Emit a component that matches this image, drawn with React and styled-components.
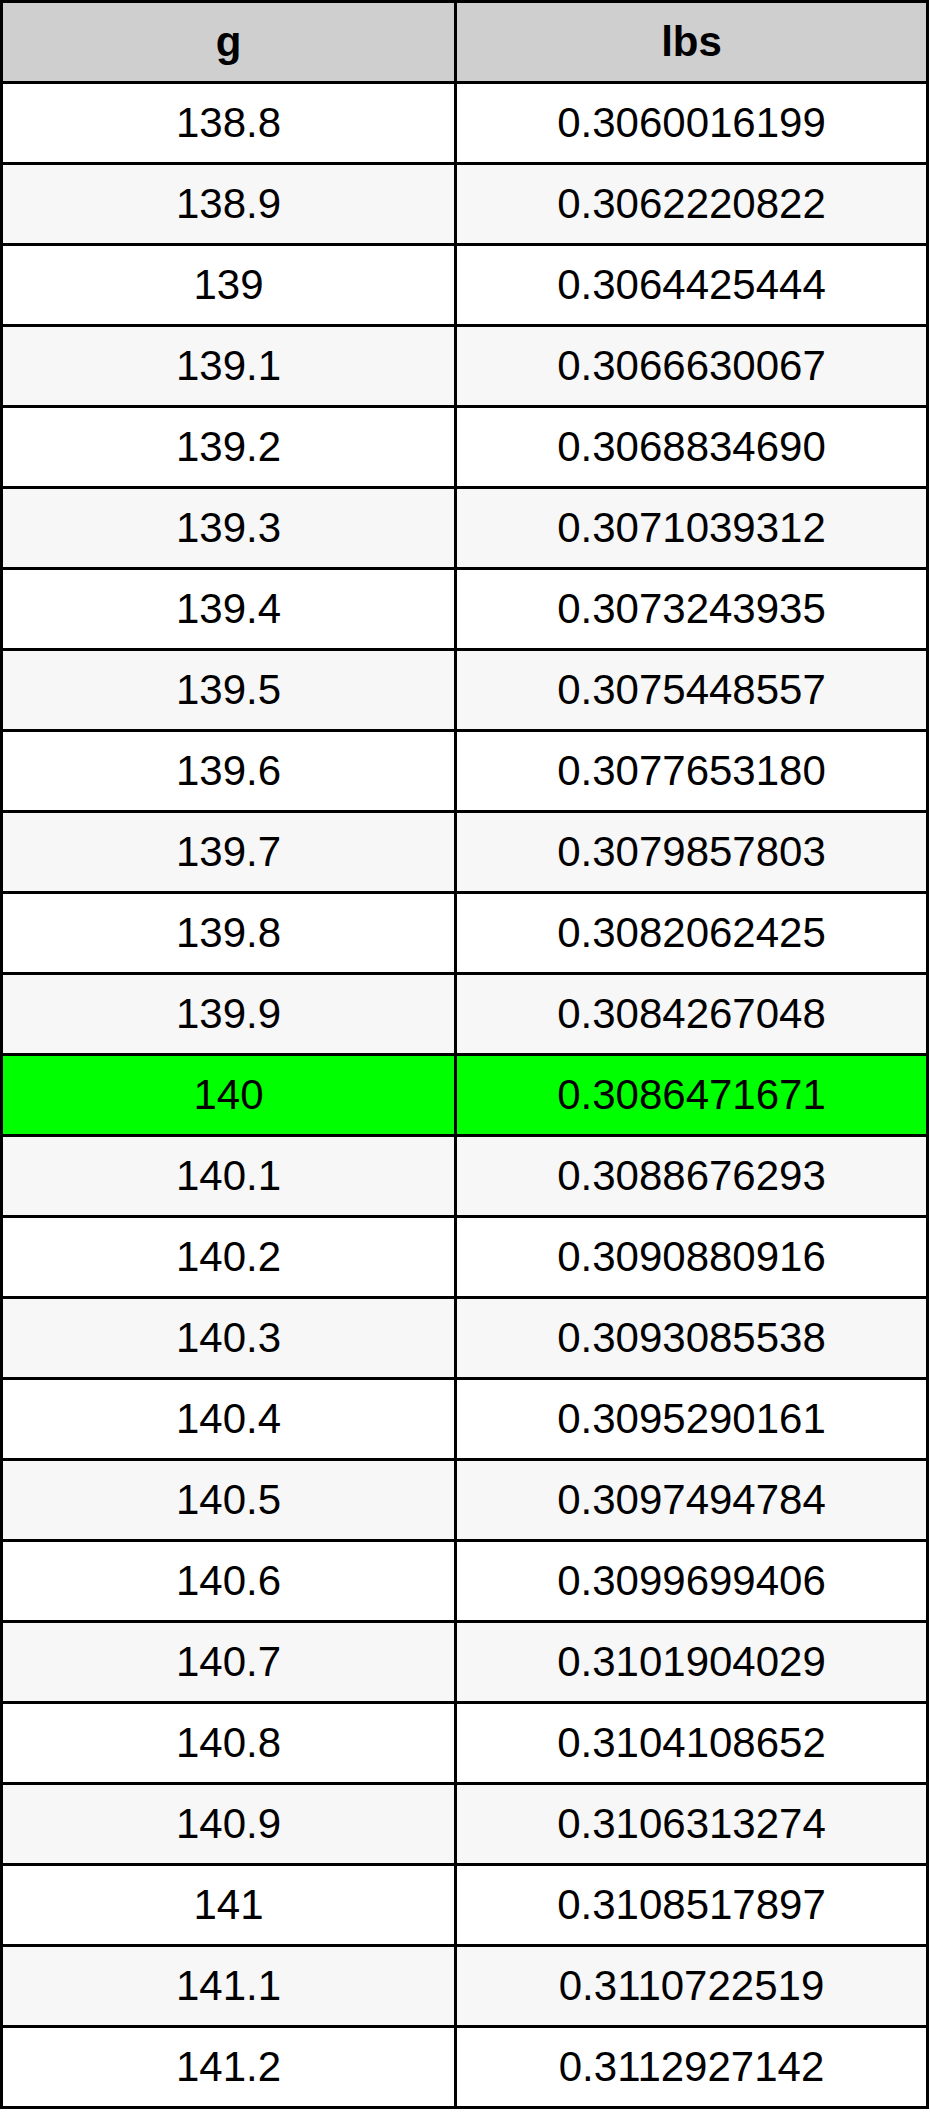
import React from "react";
import styled, { createGlobalStyle } from "styled-components";

const rows = [
  ["138.8", "0.3060016199"],
  ["138.9", "0.3062220822"],
  ["139", "0.3064425444"],
  ["139.1", "0.3066630067"],
  ["139.2", "0.3068834690"],
  ["139.3", "0.3071039312"],
  ["139.4", "0.3073243935"],
  ["139.5", "0.3075448557"],
  ["139.6", "0.3077653180"],
  ["139.7", "0.3079857803"],
  ["139.8", "0.3082062425"],
  ["139.9", "0.3084267048"],
  ["140", "0.3086471671"],
  ["140.1", "0.3088676293"],
  ["140.2", "0.3090880916"],
  ["140.3", "0.3093085538"],
  ["140.4", "0.3095290161"],
  ["140.5", "0.3097494784"],
  ["140.6", "0.3099699406"],
  ["140.7", "0.3101904029"],
  ["140.8", "0.3104108652"],
  ["140.9", "0.3106313274"],
  ["141", "0.3108517897"],
  ["141.1", "0.3110722519"],
  ["141.2", "0.3112927142"],
];

const GlobalStyle = createGlobalStyle`
  body {
    margin: 0;
    background: #fff;
    font-family: "Liberation Sans", Arial, sans-serif;
  }
`;

function App() {
  return (
    <>
      <GlobalStyle />
      <Table>
        <colgroup>
          <col style={{ width: 454 }} />
          <col />
        </colgroup>
        <thead>
          <tr>
            <Head>g</Head>
            <Head>lbs</Head>
          </tr>
        </thead>
        <tbody>
          {rows.map(([g, lbs], i) => (
            <Row key={g} $alt={i % 2 === 1} $hit={g === "140"}>
              <Cell>{g}</Cell>
              <Cell>{lbs}</Cell>
            </Row>
          ))}
        </tbody>
      </Table>
    </>
  );
}

const Table = styled.table`
  width: 929px;
  table-layout: fixed;
  border-collapse: collapse;
  border: 3px solid #000;
  color: #000;
  font-size: 42px;
`;

const Head = styled.th`
  height: 78px;
  padding: 0;
  border: 3px solid #000;
  background: #cfcfcf;
  font-weight: 700;
  text-align: center;
  vertical-align: middle;
`;

const Row = styled.tr`
  background: ${(p) => (p.$hit ? "#00ff00" : p.$alt ? "#f7f7f7" : "#ffffff")};
`;

const Cell = styled.td`
  height: 78px;
  padding: 0;
  border: 3px solid #000;
  text-align: center;
  vertical-align: middle;
`;

export default App;
